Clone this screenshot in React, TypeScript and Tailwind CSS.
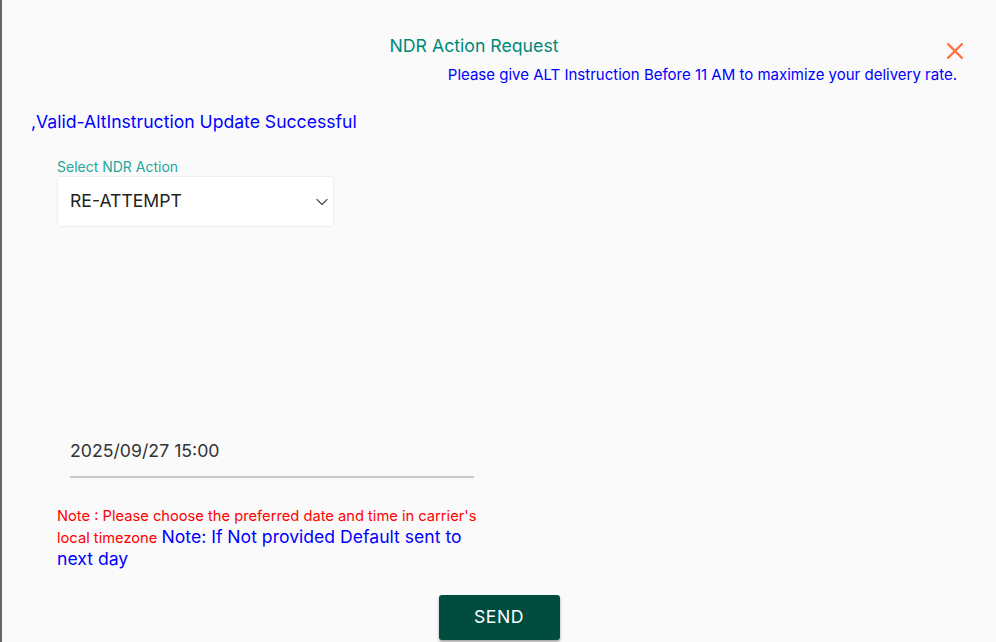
import { ChevronDown } from 'lucide-react';

export default function App() {
  return (
    <div
      className="w-full h-[642px] overflow-hidden bg-[#fafafa] border-l-2 border-[#666666]"
      style={{ fontFamily: 'Inter, "Noto Sans", sans-serif' }}
    >
      {/* header */}
      <div className="pt-[34px] pr-[32px]">
        <div className="flex items-start">
          <h2 className="flex-1 text-center text-[17.7px] leading-[24px] text-[#00897b] font-normal">
            NDR Action Request
          </h2>
          <button title="Close" className="mt-[8px] w-[18px] h-[18px] flex items-center justify-center">
            <svg width="18" height="18" viewBox="0 0 18 18" fill="none">
              <path d="M1.5 1.5 16.5 16.5M16.5 1.5 1.5 16.5" stroke="#ff7043" strokeWidth="2.4" strokeLinecap="butt" />
            </svg>
          </button>
        </div>
        <p className="mt-[5px] mr-[7px] text-right text-[15px] leading-[20px] text-[#0000ff]">
          Please give ALT Instruction Before 11 AM to maximize your delivery rate.
        </p>
      </div>

      <p className="mt-[25px] ml-[29px] text-[17.6px] leading-[24px] text-[#0000ff]">
        ,Valid-AltInstruction Update Successful
      </p>

      {/* action select */}
      <div className="ml-[55px] mt-[24px]">
        <label className="block text-[14px] leading-[18px] text-[#26a69a]">Select NDR Action</label>
        <div className="w-[277px] h-[51px] bg-white border border-[#efefef] rounded-[3px] flex items-center justify-between pl-[12px] pr-[1px]">
          <span className="text-[17.6px] text-[#222222]">RE-ATTEMPT</span>
          <ChevronDown size={20} strokeWidth={1.5} className="text-[#555555]" />
        </div>
      </div>

      {/* date */}
      <div className="ml-[68px] mt-[212px] w-[404px] pb-[13px] border-b-2 border-[#c8c8c8]">
        <span className="block text-[17.7px] leading-[24px] text-[#333333]">2025/09/27 15:00</span>
      </div>

      <p className="ml-[55px] mt-[27px] w-[426px] text-[14.7px] leading-[22px] text-[#ff0000]">
        Note : Please choose the preferred date and time in carrier's local timezone{' '}
        <span className="text-[17.6px] leading-[20px] text-[#0000ff]">Note: If Not provided Default sent to next day</span>
      </p>

      <div className="mt-[24px] flex justify-center">
        <button className="w-[121px] h-[45px] bg-[#004d40] text-white text-[17.6px] tracking-[0.5px] rounded-[3px] shadow-[0_2px_3px_rgba(0,0,0,0.35)]">
          SEND
        </button>
      </div>
    </div>
  );
}
